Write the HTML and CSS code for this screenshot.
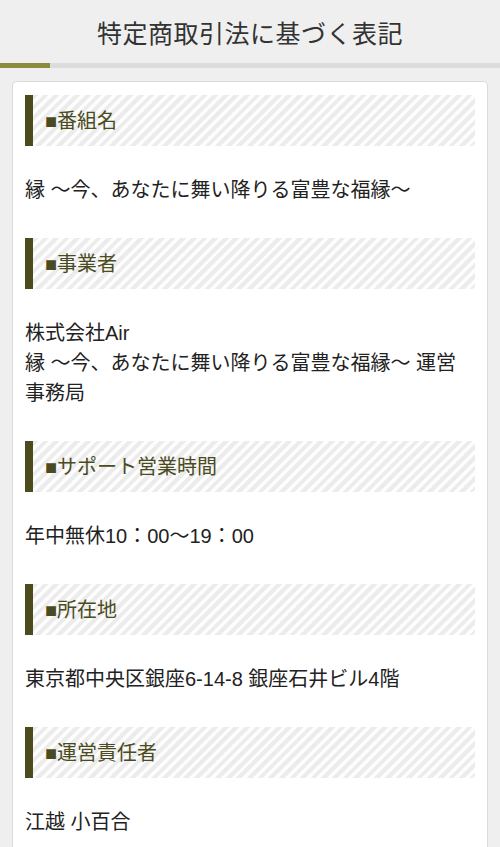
FILE: index.html
```html
<!DOCTYPE html>
<html lang="ja">
<head>
<meta charset="utf-8">
<link rel="stylesheet" href="styles.css">
</head>
<body>
<header class="page-header">
  <h1 class="page-title">特定商取引法に基づく表記</h1>
</header>
<div class="progress"><div class="progress-fill"></div></div>
<main class="card">
  <section class="item">
    <h2 class="item-head">■番組名</h2>
    <p class="item-body">縁 〜今、あなたに舞い降りる富豊な福縁〜</p>
  </section>
  <section class="item">
    <h2 class="item-head">■事業者</h2>
    <p class="item-body">株式会社Air<br>縁 〜今、あなたに舞い降りる富豊な福縁〜 運営事務局</p>
  </section>
  <section class="item">
    <h2 class="item-head">■サポート営業時間</h2>
    <p class="item-body">年中無休10：00〜19：00</p>
  </section>
  <section class="item">
    <h2 class="item-head">■所在地</h2>
    <p class="item-body">東京都中央区銀座6-14-8 銀座石井ビル4階</p>
  </section>
  <section class="item">
    <h2 class="item-head">■運営責任者</h2>
    <p class="item-body">江越 小百合</p>
  </section>
</main>
</body>
</html>
```

FILE: styles.css
```css
html, body {
  margin: 0;
  padding: 0;
}
body {
  background: #efefef;
  font-family: "Liberation Sans", "Noto Sans CJK JP", sans-serif;
  color: #222;
  overflow: hidden;
}
.page-header {
  height: 63px;
  display: flex;
  align-items: center;
  justify-content: center;
}
.page-title {
  margin: 0;
  font-family: "Noto Sans CJK JP", serif;
  font-weight: 400;
  font-size: 25px;
  color: #333;
  letter-spacing: 0.5px;
}
.progress {
  height: 5px;
  background: #dcdcdc;
}
.progress-fill {
  width: 50px;
  height: 100%;
  background: #8c8c3c;
}
.card {
  margin: 13px 12px 0;
  background: #fff;
  border: 1px solid #dadada;
  border-radius: 5px;
  padding: 13px 12px 20px;
  min-height: 800px;
}
.item-head {
  margin: 0;
  height: 51px;
  display: flex;
  align-items: center;
  border-left: 8px solid #4b4b1e;
  border-radius: 0 4px 4px 0;
  padding-left: 12px;
  padding-bottom: 3px;
  box-sizing: border-box;
  font-size: 20px;
  font-weight: 400;
  color: #4b4b22;
  background: repeating-linear-gradient(-45deg, #ececec 0 4px, #fdfdfd 4px 7.5px);
}
.item-body {
  margin: 0;
  padding: 29px 0 33px;
  font-size: 20px;
  line-height: 30px;
  color: #222;
}
```
